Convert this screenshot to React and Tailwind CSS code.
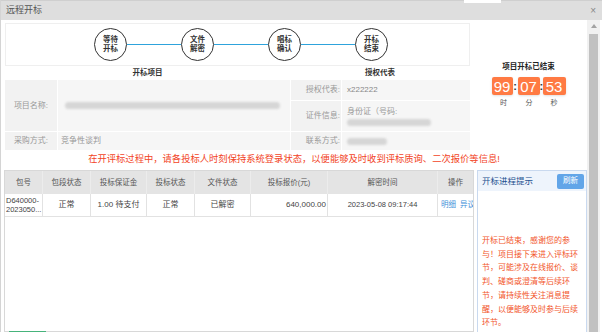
import React from "react";

const font = { fontFamily: '"Liberation Sans", "Noto Sans CJK SC", sans-serif' };

const steps = [
  ["等待", "开标"],
  ["文件", "解密"],
  ["唱标", "确认"],
  ["开标", "结束"],
];

const cols = "grid grid-cols-[38px_48px_56px_48px_56px_77px_110px_35px]";

function Blur({ w }) {
  return <div className={`h-[7px] rounded-full bg-[#d6d6d6] blur-[1px] ${w}`} />;
}

export default function App() {
  return (
    <div
      className="relative w-[602px] h-[332px] overflow-hidden bg-white border-l border-[#d4d4d4] text-[#333]"
      style={font}
    >
      {/* title bar */}
      <div className="h-[20px] bg-[#dedede] border-t border-[#cfcfcf] flex items-center justify-between pl-[5px] pr-[6px]">
        <span className="text-[9px] text-[#555]">远程开标</span>
        <span className="text-[10px] text-[#888] leading-none">×</span>
      </div>
      <div className="absolute top-0 left-[463px] w-[37px] h-[3px] bg-white" />

      <div className="flex h-[312px]">
        <div className="w-[586px] flex flex-col">
          {/* top section */}
          <div className="flex">
            <div className="w-[465px] ml-[4px]">
              {/* stepper */}
              <div className="mt-[3px] h-[43px] border border-[#efefef] flex items-center pl-[88px]">
                {steps.map((s, i) => (
                  <React.Fragment key={i}>
                    {i > 0 && <div className="w-[54px] h-[1.5px] bg-[#2ea3dc]" />}
                    <div className="w-[33px] h-[33px] rounded-full border-[1.5px] border-[#333] bg-white flex flex-col items-center justify-center text-[7.5px] leading-[8.5px] font-bold text-[#333]">
                      <span>{s[0]}</span>
                      <span>{s[1]}</span>
                    </div>
                  </React.Fragment>
                ))}
              </div>
              <div className="h-[14px] grid grid-cols-[285px_180px] items-center text-[7.5px] font-bold text-[#333]">
                <div className="text-center">开标项目</div>
                <div className="text-center">授权代表</div>
              </div>
              {/* info grid */}
              <div className="grid grid-cols-[52px_232px_50px_1fr] grid-rows-[20px_30px_18px] gap-[1px] text-[8px] h-[70px]">
                <div className="row-span-2 bg-[#f2f2f2] flex items-center justify-center text-[#999]">项目名称:</div>
                <div className="row-span-2 bg-[#f6f6f6] flex items-center pl-[7px]">
                  <Blur w="w-[215px]" />
                </div>
                <div className="bg-[#f2f2f2] flex items-center justify-end pr-[1px] text-[#999]">授权代表:</div>
                <div className="bg-[#f6f6f6] flex items-center pl-[5px] text-[#888]">x222222</div>
                <div className="bg-[#f2f2f2] flex items-center justify-end pr-[1px] text-[#999]">证件信息:</div>
                <div className="bg-[#f6f6f6] flex flex-col justify-center gap-[3px] pl-[5px] text-[#999]">
                  <span className="leading-[9px]">身份证（号码:</span>
                  <Blur w="w-[84px]" />
                </div>
                <div className="bg-[#f2f2f2] flex items-center justify-center text-[#999]">采购方式:</div>
                <div className="bg-[#f6f6f6] flex items-center pl-[3px] text-[#999]">竞争性谈判</div>
                <div className="bg-[#f2f2f2] flex items-center justify-end pr-[1px] text-[#999]">联系方式:</div>
                <div className="bg-[#f6f6f6] flex items-center pl-[5px]">
                  <Blur w="w-[40px]" />
                </div>
              </div>
            </div>

            {/* countdown */}
            <div className="flex-1 flex flex-col items-center pt-[41px]">
              <div className="text-[7.5px] font-bold leading-[12px] text-[#222]">项目开标已结束</div>
              <div className="mt-[4px] flex items-center">
                <div className="w-[21px] h-[18px] rounded-[2px] bg-[#ff7a43] text-white text-[15px] leading-none flex items-center justify-center shadow-sm">99</div>
                <span className="w-[5px] text-center text-[11px] font-bold leading-none">:</span>
                <div className="w-[22px] h-[18px] rounded-[2px] bg-[#ff7a43] text-white text-[15px] leading-none flex items-center justify-center shadow-sm">07</div>
                <span className="w-[3px] text-center text-[11px] font-bold leading-none">:</span>
                <div className="w-[23px] h-[18px] rounded-[2px] bg-[#ff7a43] text-white text-[15px] leading-none flex items-center justify-center shadow-sm">53</div>
              </div>
              <div className="mt-[3px] flex text-[7px] leading-[10px] text-[#555]">
                <span className="w-[26px] text-center">时</span>
                <span className="w-[25px] text-center">分</span>
                <span className="w-[25px] text-center">秒</span>
              </div>
            </div>
          </div>

          {/* notice */}
          <div className="h-[20px] flex items-center justify-center text-[9.3px] text-[#f2431e]">
            在开评标过程中，请各投标人时刻保持系统登录状态，以便能够及时收到评标质询、二次报价等信息!
          </div>

          {/* bottom */}
          <div className="flex flex-1 min-h-0">
            <div className="ml-[3px] w-[470px] border border-[#d8d8d8] overflow-hidden">
              <div className={`${cols} h-[23px] bg-[#e4e4e4] text-[7.5px] text-[#555]`}>
                {["包号", "包段状态", "投标保证金", "投标状态", "文件状态", "投标报价(元)", "解密时间", "操作"].map((h, i) => (
                  <div key={i} className={`flex items-center justify-center ${i < 7 ? "border-r border-[#ececec]" : ""}`}>
                    {h}
                  </div>
                ))}
              </div>
              <div className={`${cols} h-[23px] border-b border-[#e2e2e2] text-[8px] text-[#444]`}>
                <div className="border-r border-[#e2e2e2] flex flex-col justify-center pl-[1px] leading-[9.5px] text-[7.5px]">
                  <span>D640000-</span>
                  <span>2023050...</span>
                </div>
                <div className="border-r border-[#e2e2e2] flex items-center justify-center">正常</div>
                <div className="border-r border-[#e2e2e2] flex items-center justify-center">1.00 待支付</div>
                <div className="border-r border-[#e2e2e2] flex items-center justify-center">正常</div>
                <div className="border-r border-[#e2e2e2] flex items-center justify-center">已解密</div>
                <div className="border-r border-[#e2e2e2] flex items-center justify-end pr-[1px]">640,000.00</div>
                <div className="border-r border-[#e2e2e2] flex items-center justify-center text-[7.5px]">2023-05-08 09:17:44</div>
                <div className="flex items-center pl-[3px] gap-[4px] whitespace-nowrap overflow-hidden text-[7.5px] text-[#3d8fd9]">
                  <span>明细</span>
                  <span>异议</span>
                </div>
              </div>
            </div>

            {/* progress panel */}
            <div className="ml-[3px] w-[110px] border border-[#c9d9ef] border-b-0 flex flex-col">
              <div className="h-[20px] bg-[#eef4fc] flex items-center justify-between pl-[4px] pr-[2px]">
                <span className="text-[8.5px] text-[#23508f]">开标进程提示</span>
                <span className="w-[27px] h-[15px] bg-[#62a5e8] rounded-[2px] text-white text-[7.5px] flex items-center justify-center">刷新</span>
              </div>
              <div className="mt-[43px] pl-[4px] text-[8px] leading-[13.7px] text-[#f2552a] flex flex-col">
                <span>开标已结束，感谢您的参</span>
                <span>与！项目接下来进入评标环</span>
                <span>节，可能涉及在线报价、谈</span>
                <span>判、磋商或澄清等后续环</span>
                <span>节，请持续性关注消息提</span>
                <span>醒，以便能够及时参与后续</span>
                <span>环节。</span>
              </div>
            </div>
          </div>
        </div>

        {/* scrollbar */}
        <div className="w-[13px] bg-[#f1f1f1] flex flex-col items-center pt-[4px]">
          <div className="w-0 h-0 border-l-[3px] border-r-[3px] border-b-[4px] border-l-transparent border-r-transparent border-b-[#a3a3a3]" />
          <div className="mt-[6px] w-[9px] flex-1 bg-[#c1c1c1]" />
        </div>
      </div>
      <div className="absolute bottom-0 left-[8px] w-[37px] h-[1px] bg-[#46b37b]" />
    </div>
  );
}
